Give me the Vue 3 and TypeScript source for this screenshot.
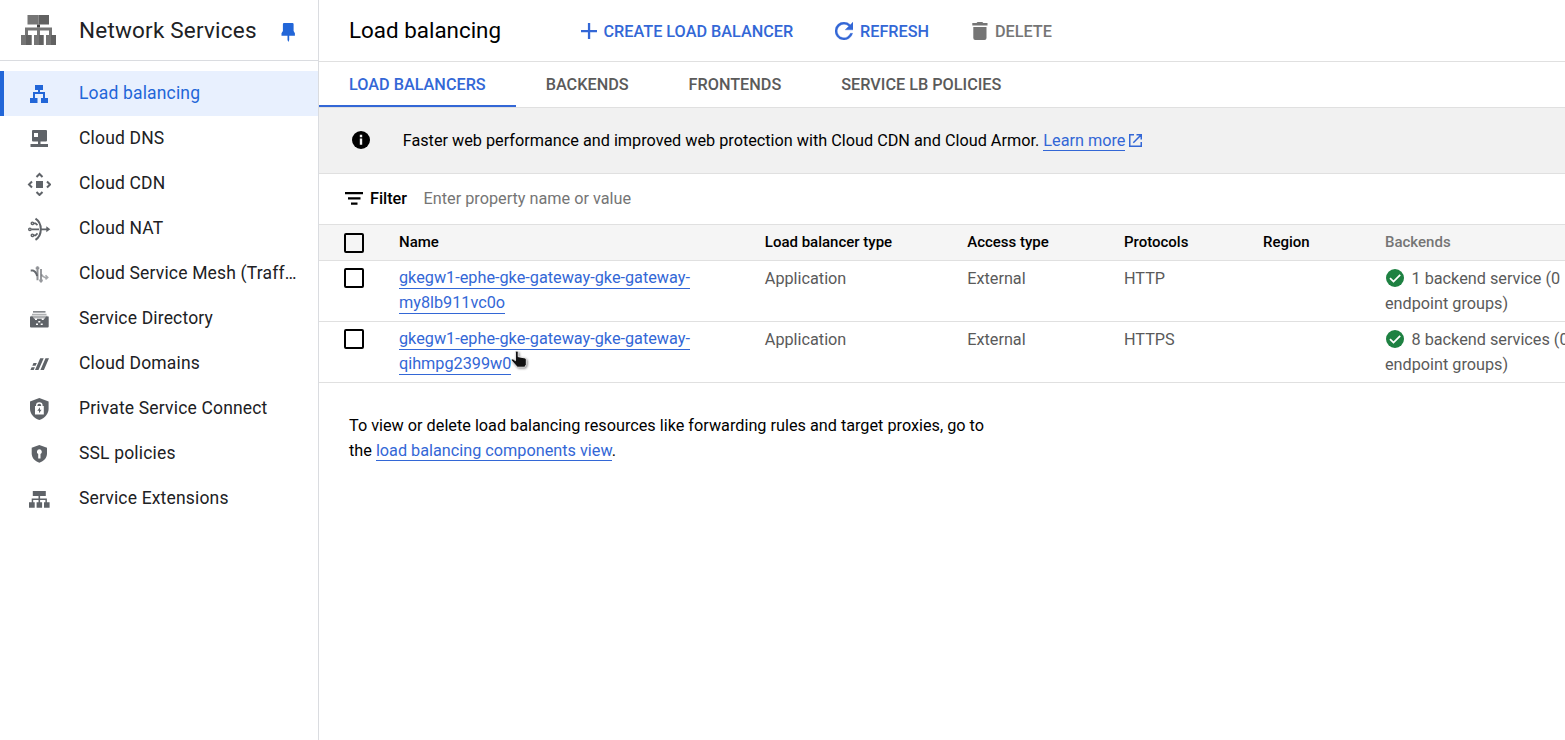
<script setup lang="ts">
interface Shape { d: string; o?: number; fill?: string; stroke?: number }
interface NavItem { label: string; shapes: Shape[] }

const navItems: NavItem[] = [
  { label: 'Load balancing', shapes: [{ d: 'M8 3h8v5h-3v2h5v6h3v5h-7v-5h2v-4H8v4h2.5v5H3v-5h3v-6h5V8H8z' }] },
  { label: 'Cloud DNS', shapes: [
    { d: 'M5 4a1 1 0 0 1 1-1h13a1 1 0 0 1 1 1v9.500a1 1 0 0 1-1 1h-5.500V17H21v3H3.500v-3H11v-2.500H6a1 1 0 0 1-1-1zM7 6v4h4V6z' }] },
  { label: 'Cloud CDN', shapes: [
    { d: 'M9 9h7v7H9z' },
    { d: 'M9.500 5l3-3L15.500 5M9.500 20l3 3 3-3M5 9.500L2 12.500l3 3M20 9.500l3 3-3 3', stroke: 2 }] },
  { label: 'Cloud NAT', shapes: [
    { d: 'M8.500 1.700C12 4 13.800 8 13.800 12.300S12 20.700 8.500 22.800', stroke: 2 },
    { d: 'M4.300 12.300H12M14 12.300h6M6.800 6.300h1.700l2 1.900M6.800 18.300h1.700l2-1.900', stroke: 1.8 },
    { d: 'M4.100 12.300a1.200 1.200 0 1 1-2.400 0a1.200 1.200 0 1 1 2.400 0M6.600 6.300a1.200 1.200 0 1 1-2.400 0a1.200 1.200 0 1 1 2.400 0M6.600 18.300a1.200 1.200 0 1 1-2.400 0a1.200 1.200 0 1 1 2.400 0', stroke: 1.4 },
    { d: 'M19.300 9.300l4 3-4 3z' }] },
  { label: 'Cloud Service Mesh (Traff…', shapes: [
    { d: 'M3.700 8.500h2.200c2.500.500 3.500 3 4.300 5.500', stroke: 2, o: 0.95 },
    { d: 'M10.500 4.300v14M8.700 6.300h3.600', stroke: 2, o: 0.7 },
    { d: 'M14 7v13.500M12.200 18.500h3.600', stroke: 2, o: 0.65 },
    { d: 'M14.500 12.500c1 1.800 1.800 2.700 3.500 3h2.600M18.500 13.200l2.200 2.300-2.200 1.800', stroke: 1.600, o: 0.55 }] },
  { label: 'Service Directory', shapes: [
    { d: 'M6 4.300h12.500v1.300H6zM3 9.500h2.500l1.800 2.500h10l1.800-2.500h2.600v10a1 1 0 0 1-1 1H4a1 1 0 0 1-1-1z' },
    { d: 'M5 6.700h14.500v1.600H5zM4 8.700h16.500v3H4z', o: 0.5 },
    { d: 'M8 11.500h2v1.400H8zM14.700 11.500h2v1.400h-2zM11.300 14h2v1.400h-2zM9 16.500h2v1.400H9zM13.700 16.500h2v1.400h-2zM10 13l1.500 1.200M14.700 13l-1.500 1.200M10.500 16.500l1-1.200M14 16.500l-1-1.200', fill: '#fff' }] },
  { label: 'Cloud Domains', shapes: [
    { d: 'M13.200 6.300h3.500L11.500 18H8zM18.500 6.300H22L16.900 18h-3.500zM6.500 10.900h3.300L8.600 13.700H5.300zM4.600 15.200h3.300L6.700 18H3.400z' }] },
  { label: 'Private Service Connect', shapes: [
    { d: 'M12.300 1l9.300 3.500v7.300c0 5-3.700 9.500-9.300 11.200C6.700 21.300 3 16.800 3 11.800V4.500z' },
    { d: 'M9.700 9V8.600a2.600 2.600 0 0 1 5.200 0V9', stroke: 1.4, fill: '#fff' },
    { d: 'M8 9h8.800v8.500H8z', fill: '#fff' },
    { d: 'M13 10.300l-2.700 3.500H12v2.500l2.600-3.500h-1.600z' }] },
  { label: 'SSL policies', shapes: [
    { d: 'M12.300 3L20 5.700v5.800c0 4.300-3.200 7.900-7.700 9.200-4.400-1.300-7.600-4.900-7.600-9.200V5.700z' },
    { d: 'M12.400 7.300a2.500 2.500 0 0 1 1.100 4.700v4.500h-2.300V12a2.500 2.500 0 0 1 1.200-4.700z', fill: '#fff' }] },
  { label: 'Service Extensions', shapes: [
    { d: 'M5.800 4h13v5h-5.700v2.400h6.800v3.900h2.700v5.400h-5.600v-5.400h1.400v-2.400h-5.300v2.400h2v5.400H9.600v-5.400h1.900v-2.400H6.200v2.400h1.500v5.400H2v-5.400h2.700v-3.900h6.800V9H5.800z' }] },
]

const tabs = ['LOAD BALANCERS', 'BACKENDS', 'FRONTENDS', 'SERVICE LB POLICIES']
const columns = ['Name', 'Load balancer type', 'Access type', 'Protocols', 'Region', 'Backends']
const rows = [
  { name: ['gkegw1-ephe-gke-gateway-gke-gateway-', 'my8lb911vc0o'], protocol: 'HTTP', backends: '1 backend service (0' },
  { name: ['gkegw1-ephe-gke-gateway-gke-gateway-', 'qihmpg2399w0'], protocol: 'HTTPS', backends: '8 backend services (0' },
]
</script>

<template>
  <div class="console">
    <aside class="sidebar">
      <header class="brand">
        <svg class="brand-logo" width="36" height="30" viewBox="0 0 36 30">
          <path fill="#757575" d="M6.500 0h11v9.500h-11zM4 12.500h27v8h-3v-5H19v5h-3v-5H7v5H4zM0 20h10.500v10H0zM13 20h9.500v10H13zM25 20h10v10H25z" />
          <path fill="#616161" d="M17.500 0h10.500v9.500H17.500zM5 20h5.500v10H5zM18 20h4.500v10H18zM30 20h5v10h-5z" />
          <path fill="#424242" d="M16 9.500h3v3h-3z" />
        </svg>
        <h1>Network Services</h1>
        <svg class="pin" width="14" height="20" viewBox="0 0 14 20">
          <path fill="#2266d8" d="M3 0h8.500a1.200 1.200 0 0 1 1.100 1.200V8l1.300 2.200v2.600H8.200V17L7.400 19l-.900-2v-4.200H.500v-2.600L1.900 8V1.200A1.200 1.200 0 0 1 3 0z" />
        </svg>
      </header>
      <nav>
        <a v-for="(item, i) in navItems" :key="item.label" :class="['nav-item', { active: i === 0 }]">
          <svg width="24" height="24" viewBox="0 0 24 24">
            <path
              v-for="(s, j) in item.shapes" :key="j" :d="s.d"
              :fill="s.stroke ? 'none' : s.fill || 'currentColor'"
              :stroke="s.stroke ? s.fill || 'currentColor' : 'none'"
              :stroke-width="s.stroke" :opacity="s.o"
            />
          </svg>
          <span>{{ item.label }}</span>
        </a>
      </nav>
    </aside>

    <main>
      <header class="toolbar">
        <h2>Load balancing</h2>
        <button class="create">
          <svg width="16" height="16" viewBox="0 0 16 16"><path d="M6.900 0h2.300v6.900H16v2.300H9.200V16H6.900V9.200H0V6.900h6.900z" fill="currentColor" /></svg>
          <span>CREATE LOAD BALANCER</span>
        </button>
        <button class="refresh">
          <svg width="18" height="18" viewBox="0 0 18 18"><path d="M15.360 2.640A8.950 8.950 0 0 0 9 0a9 9 0 1 0 8.700 11.250h-2.340A6.750 6.750 0 1 1 9 2.250c1.870 0 3.530.780 4.750 2L10.130 7.870H18V0z" fill="currentColor" stroke="currentColor" stroke-width=".3" /></svg>
          <span>REFRESH</span>
        </button>
        <button class="delete">
          <svg width="16" height="18" viewBox="0 0 16 18"><path d="M1.300 5h13.200v11a2 2 0 0 1-2 2H3.300a2 2 0 0 1-2-2zM.300 1H4.500l1-1h4.800l1 1h4.200v2.500H.300z" fill="currentColor" /></svg>
          <span>DELETE</span>
        </button>
      </header>

      <div class="tabs">
        <a v-for="(tab, i) in tabs" :key="tab" :class="{ selected: i === 0 }">{{ tab }}</a>
      </div>

      <section class="banner">
        <svg class="info" width="18" height="18" viewBox="0 0 18 18">
          <circle cx="9" cy="9" r="9" fill="#000" />
          <path d="M7.800 3.800h2.400v2.400H7.800zM7.800 7.500h2.400v6.300H7.800z" fill="#f1f1f1" />
        </svg>
        <p>Faster web performance and improved web protection with Cloud CDN and Cloud Armor. <a class="link">Learn more</a></p>
        <svg class="external" width="13" height="13" viewBox="0 0 13 13">
          <path d="M5 .750H.750v11.500h11.500V8M7.500.750h4.750V5.500M12 1L4.300 8.700" fill="none" stroke="#3367d6" stroke-width="1.500" />
        </svg>
      </section>

      <section class="filter">
        <svg width="18" height="13" viewBox="0 0 18 13"><path d="M0 0h18v2.200H0zM3 5.200h12.500v2.300H3zM6 10.400h6.500v2.300H6z" fill="#000" /></svg>
        <strong>Filter</strong>
        <span>Enter property name or value</span>
      </section>

      <div class="table">
        <div class="row head">
          <i class="checkbox"></i>
          <span v-for="col in columns" :key="col">{{ col }}</span>
        </div>
        <div v-for="row in rows" :key="row.protocol" class="row body">
          <i class="checkbox"></i>
          <div><a v-for="part in row.name" :key="part" class="link name-part">{{ part }}</a></div>
          <span>Application</span>
          <span>External</span>
          <span>{{ row.protocol }}</span>
          <span></span>
          <div class="backends">
            <div class="status">
              <svg width="18" height="18" viewBox="0 0 18 18">
                <circle cx="9" cy="9" r="9" fill="#1e8142" />
                <path d="M4 9.200l3.500 3.400 6.700-6.700" fill="none" stroke="#fff" stroke-width="1.800" />
              </svg>
              <span>{{ row.backends }}</span>
            </div>
            <div>endpoint groups)</div>
          </div>
        </div>
        <svg class="pointer" width="18" height="20" viewBox="0 0 18 20">
          <path d="M4.500 1.200c0-1.600 2.700-1.600 2.700 0v4.500l6.300 1.200c1.200.300 1.800 1 1.800 2.200v4.400l-1.500 2.700H6.400L.700 9.800c-.900-1.200.500-2.300 1.700-1.500l2.100 1.400z" fill="#111" stroke="#fff" stroke-width=".8" />
        </svg>
      </div>

      <p class="note">
        To view or delete load balancing resources like forwarding rules and target proxies, go to<br />
        the <a class="link">load balancing components view</a>.
      </p>
    </main>
  </div>
</template>

<style>
body { margin: 0; background: #fff; }
</style>

<style scoped>
.console {
  display: flex;
  height: 740px;
  overflow: hidden;
  font-family: Roboto, "Liberation Sans", sans-serif;
  font-size: 16.24px;
  line-height: 25px;
  color: #000;
}
h1, h2, p { margin: 0; font-weight: 400; }
svg { display: block; flex: none; }
.sidebar {
  box-sizing: border-box;
  flex: 0 0 319px;
  border-right: 1px solid #dadce0;
  color: #202124;
}
.brand {
  box-sizing: border-box;
  display: flex;
  align-items: center;
  height: 61px;
  padding-left: 21px;
  border-bottom: 1px solid #dadce0;
}
.brand h1 {
  width: 202px;
  margin-left: 22px;
  font-size: 22.5px;
  letter-spacing: 0.2px;
  white-space: nowrap;
}
.pin { margin-top: 5px; }
nav { padding-top: 10px; }
.nav-item {
  box-sizing: border-box;
  display: flex;
  align-items: center;
  height: 45px;
  padding-left: 27px;
  font-size: 17.5px;
  letter-spacing: 0.17px;
  white-space: nowrap;
}
.nav-item svg { margin-top: 1px; color: #5f6368; }
.nav-item span { margin-left: 28px; }
.nav-item.active {
  padding-left: 23px;
  border-left: 4px solid #2266d8;
  background: #e8f0fe;
  color: #2266d8;
}
.nav-item.active svg { color: #2266d8; }
main { flex: 1; min-width: 0; }
.toolbar {
  display: flex;
  align-items: center;
  height: 61px;
  padding-left: 30px;
  border-bottom: 1px solid #e0e0e0;
}
.toolbar h2 { width: 231.5px; font-size: 22.4px; }
button {
  display: flex;
  align-items: center;
  padding: 0;
  border: 0;
  background: none;
  color: #3367d6;
  font: 500 16.24px/25px Roboto, sans-serif;
  white-space: nowrap;
}
button span { padding-top: 2px; }
.create { width: 254.500px; gap: 7px; }
.refresh { width: 137px; gap: 7px; }
.delete { gap: 7px; color: #757575; }
.tabs {
  display: flex;
  height: 45px;
  border-bottom: 1px solid #e0e0e0;
  font-weight: 500;
  color: #5a5a5a;
}
.tabs a { padding: 10px 30px 8px; }
.tabs .selected { color: #3367d6; border-bottom: 2px solid #3367d6; }
.banner {
  display: flex;
  align-items: center;
  height: 65px;
  padding-left: 33px;
  border-bottom: 1px solid #e0e0e0;
  background: #f1f1f1;
}
.info { margin-top: -1px; }
.banner p { margin-left: 32.700px; white-space: nowrap; }
.external { margin-left: 4px; }
.link {
  color: #3367d6;
  border-bottom: 1px solid #3367d6;
}
.filter {
  display: flex;
  align-items: center;
  height: 50px;
  padding-left: 26px;
}
.filter svg { margin-top: -1px; }
.filter strong { margin: -2px 0 0 7px; font-weight: 500; }
.filter span { margin: -2px 0 0 16.500px; color: #757575; }
.table { position: relative; border-top: 1px solid #e0e0e0; }
.row {
  display: grid;
  grid-template-columns: 55px 365.800px 202.400px 156.800px 139px 122px 1fr;
  padding-left: 25px;
  border-bottom: 1px solid #e0e0e0;
  white-space: nowrap;
}
.head {
  height: 35px;
  align-items: center;
  background: #f5f5f5;
  font-size: 15px;
  font-weight: 500;
}
.head span:last-child { color: #757575; }
.body {
  box-sizing: border-box;
  height: 61px;
  padding-top: 5px;
  color: #5a5a5a;
}
.checkbox {
  box-sizing: border-box;
  width: 20px;
  height: 20px;
  border: 2px solid #000;
  border-radius: 2px;
}
.body .checkbox { margin-top: 2px; }
.head .checkbox { margin-top: 1px; }
.name-part {
  display: block;
  box-sizing: border-box;
  width: fit-content;
  height: 23px;
  line-height: 23px;
  margin-bottom: 2px;
}
.status { display: flex; align-items: center; gap: 7px; padding-left: 1.500px; }
.status svg { margin-top: -1px; }
.pointer { position: absolute; left: 192px; top: 126px; filter: drop-shadow(1px 1px 1px rgba(0, 0, 0, .45)); }
.note { padding: 30px 0 0 30px; }
</style>
